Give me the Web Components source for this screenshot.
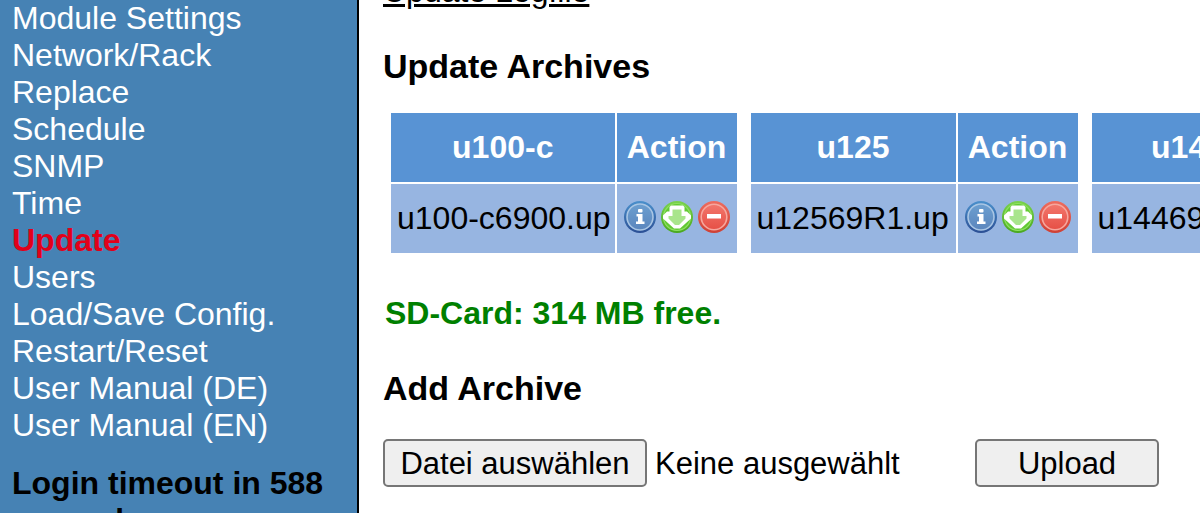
<!DOCTYPE html>
<html lang="en">
<head>
<meta charset="utf-8">
<title>Update</title>
<style>
  html, body { margin: 0; }
  body {
    min-height: 100vh;
    overflow: hidden;
    background: #fff;
    color: #000;
    font: 32px/37px "Liberation Sans", Arial, sans-serif;
  }
</style>
</head>
<body>
<app-shell>
  <side-nav slot="nav">
    <nav-link>Module Settings</nav-link>
    <nav-link>Network/Rack</nav-link>
    <nav-link>Replace</nav-link>
    <nav-link>Schedule</nav-link>
    <nav-link>SNMP</nav-link>
    <nav-link>Time</nav-link>
    <nav-link active>Update</nav-link>
    <nav-link>Users</nav-link>
    <nav-link>Load/Save Config.</nav-link>
    <nav-link>Restart/Reset</nav-link>
    <nav-link>User Manual (DE)</nav-link>
    <nav-link>User Manual (EN)</nav-link>
    <span slot="status">Login timeout in 588 seconds</span>
  </side-nav>
  <update-page></update-page>
</app-shell>

<script>
class BaseElement extends HTMLElement {
  connectedCallback() {
    if (this.shadowRoot) return;
    this.attachShadow({ mode: "open" }).innerHTML = this.render();
    this.ready();
  }
  ready() {}
}

customElements.define("app-shell", class extends BaseElement {
  render() {
    return `
      <style>
        :host { display: grid; grid-template-columns: minmax(240px, 359px) minmax(0, 1fr); height: 100vh; overflow: hidden; }
        aside { box-sizing: border-box; background: #4682b4; border-right: 2px solid #000; overflow: hidden; }
        main { padding: 0 24px; overflow: hidden; }
      </style>
      <aside><slot name="nav"></slot></aside>
      <main><slot></slot></main>`;
  }
});

customElements.define("side-nav", class extends BaseElement {
  render() {
    return `
      <style>
        :host { display: block; padding: 0 12px; }
        nav { display: flex; flex-direction: column; }
        p { margin: 21px 0 0; font-weight: bold; color: #000; }
      </style>
      <nav><slot></slot></nav>
      <p><slot name="status"></slot></p>`;
  }
});

customElements.define("nav-link", class extends BaseElement {
  render() {
    return `
      <style>
        :host { display: block; }
        a { color: #fff; text-decoration: none; }
        :host([active]) a { color: #e2001a; font-weight: bold; }
      </style>
      <a href="#"><slot></slot></a>`;
  }
});

customElements.define("icon-button", class extends BaseElement {
  render() {
    const art = {
      info: `
        <defs>
          <linearGradient id="r" x2="0" y2="1"><stop stop-color="#4a90cc"/><stop offset="1" stop-color="#2b4f94"/></linearGradient>
          <linearGradient id="f" x2="0" y2="1"><stop stop-color="#6c9fd0"/><stop offset="1" stop-color="#5b86bd"/></linearGradient>
        </defs>
        <circle cx="16" cy="16" r="16" fill="url(#r)"/>
        <circle cx="16" cy="16" r="13" fill="url(#f)" stroke="#a9c6e4" stroke-width="1.6"/>
        <rect x="14" y="8" width="4.500" height="3.500" rx="1" fill="#fff"/>
        <path d="M12.500 13h6v7.500h2V23h-8.500v-2.500h2v-5h-1.500z" fill="#fff"/>`,
      download: `
        <defs><linearGradient id="r" x2="0" y2="1"><stop stop-color="#7ad24e"/><stop offset="1" stop-color="#4aa81f"/></linearGradient></defs>
        <circle cx="16" cy="16" r="16" fill="url(#r)"/>
        <circle cx="16" cy="16" r="13.5" fill="#62c934" stroke="#8fe062" stroke-width="1.2"/>
        <path d="M10 4.500h12l1.500 1.500v4.500h2.500l4 4v3L19 27.500h-6L2 17.500v-3l4-4h2.500V6z" fill="#fff"/>
        <path d="M11.500 8.500h9v6.500h4v2.500l-6.500 6.500h-4l-6.500-6.500V15h4z" fill="#a9e58c"/>`,
      remove: `
        <defs>
          <linearGradient id="r" x2="0" y2="1"><stop stop-color="#ee6c5e"/><stop offset="1" stop-color="#cf4034"/></linearGradient>
          <linearGradient id="f" x2="0" y2="1"><stop stop-color="#f2776c"/><stop offset="1" stop-color="#e64f45"/></linearGradient>
        </defs>
        <circle cx="16" cy="16" r="16" fill="url(#r)"/>
        <circle cx="16" cy="16" r="12.800" fill="url(#f)" stroke="#f6a79e" stroke-width="1.600"/>
        <rect x="9" y="13" width="14" height="4.500" fill="#fff"/>`
    };
    return `
      <style>
        :host { display: block; }
        button { display: block; width: 32px; height: 32px; padding: 0; border: 0; background: none; cursor: pointer; }
        svg { display: block; width: 32px; height: 32px; }
      </style>
      <button type="button" aria-label="${this.getAttribute("kind")}">
        <svg viewBox="0 0 32 32" aria-hidden="true">${art[this.getAttribute("kind")]}</svg>
      </button>`;
  }
});

customElements.define("archive-table", class extends BaseElement {
  render() {
    return `
      <style>
        :host { display: block; flex: none; }
        table { border-collapse: separate; border-spacing: 2px; margin: -2px; white-space: nowrap; }
        th, td { box-sizing: border-box; height: 69px; padding: 0 5px; vertical-align: middle; }
        th { background: #5893d4; color: #fff; font-weight: bold; text-align: center; }
        td { background: #97b5e1; }
        .file { min-width: var(--file-width, 205px); }
        td.file { padding: 0 4px 0 6px; }
        .act { width: 120px; }
        .icons { display: flex; justify-content: center; gap: 5px; padding-bottom: 3px; }
      </style>
      <table>
        <thead><tr><th class="file" scope="col">${this.getAttribute("module")}</th><th class="act" scope="col">Action</th></tr></thead>
        <tbody><tr>
          <td class="file">${this.getAttribute("file")}</td>
          <td class="act"><div class="icons">
            <icon-button kind="info"></icon-button>
            <icon-button kind="download"></icon-button>
            <icon-button kind="remove"></icon-button>
          </div></td>
        </tr></tbody>
      </table>`;
  }
});

customElements.define("upload-form", class extends BaseElement {
  render() {
    return `
      <style>
        :host { display: block; }
        form { display: flex; align-items: center; font-size: 31px; }
        button {
          box-sizing: border-box; height: 48px; padding: 0;
          border: 2px solid #767676; border-radius: 5px;
          background: #efefef; color: #000; font: inherit; white-space: nowrap;
        }
        output { width: 320px; padding-left: 8px; white-space: nowrap; }
        .pick { width: 264px; }
        .send { width: 184px; }
      </style>
      <form>
        <input id="file" type="file" hidden aria-label="Datei auswählen">
        <button type="button" class="pick">Datei auswählen</button>
        <output for="file">Keine ausgewählt</output>
        <button type="submit" class="send">Upload</button>
      </form>`;
  }
  ready() {
    const $ = s => this.shadowRoot.querySelector(s);
    $(".pick").addEventListener("click", () => $("#file").click());
    $("#file").addEventListener("change", e => {
      $("output").textContent = e.target.files[0]?.name ?? "Keine ausgewählt";
    });
    $("form").addEventListener("submit", e => e.preventDefault());
  }
});

customElements.define("update-page", class extends BaseElement {
  render() {
    return `
      <style>
        /* The page rests slightly scrolled, so the log link is cut by the top edge. */
        :host { display: block; margin-top: -27px; }
        a { display: block; width: fit-content; color: #000; text-decoration: underline; }
        h3 { margin: 36px 0 0; font-size: 34px; line-height: 40px; }
        .tables { display: flex; gap: 14px; margin: 27px 0 42px 8px; }
        .narrow { --file-width: 192px; }
        .free { margin: 0; padding-left: 2px; color: #008000; font-weight: bold; }
        upload-form { margin-top: 31px; }
      </style>
      <a href="#">Update Logfile</a>
      <h3>Update Archives</h3>
      <div class="tables">
        <archive-table module="u100-c" file="u100-c6900.up"></archive-table>
        <archive-table module="u125" file="u12569R1.up"></archive-table>
        <archive-table class="narrow" module="u144" file="u144690.up"></archive-table>
      </div>
      <p class="free">SD-Card: 314 MB free.</p>
      <h3>Add Archive</h3>
      <upload-form></upload-form>`;
  }
});
</script>
</body>
</html>
